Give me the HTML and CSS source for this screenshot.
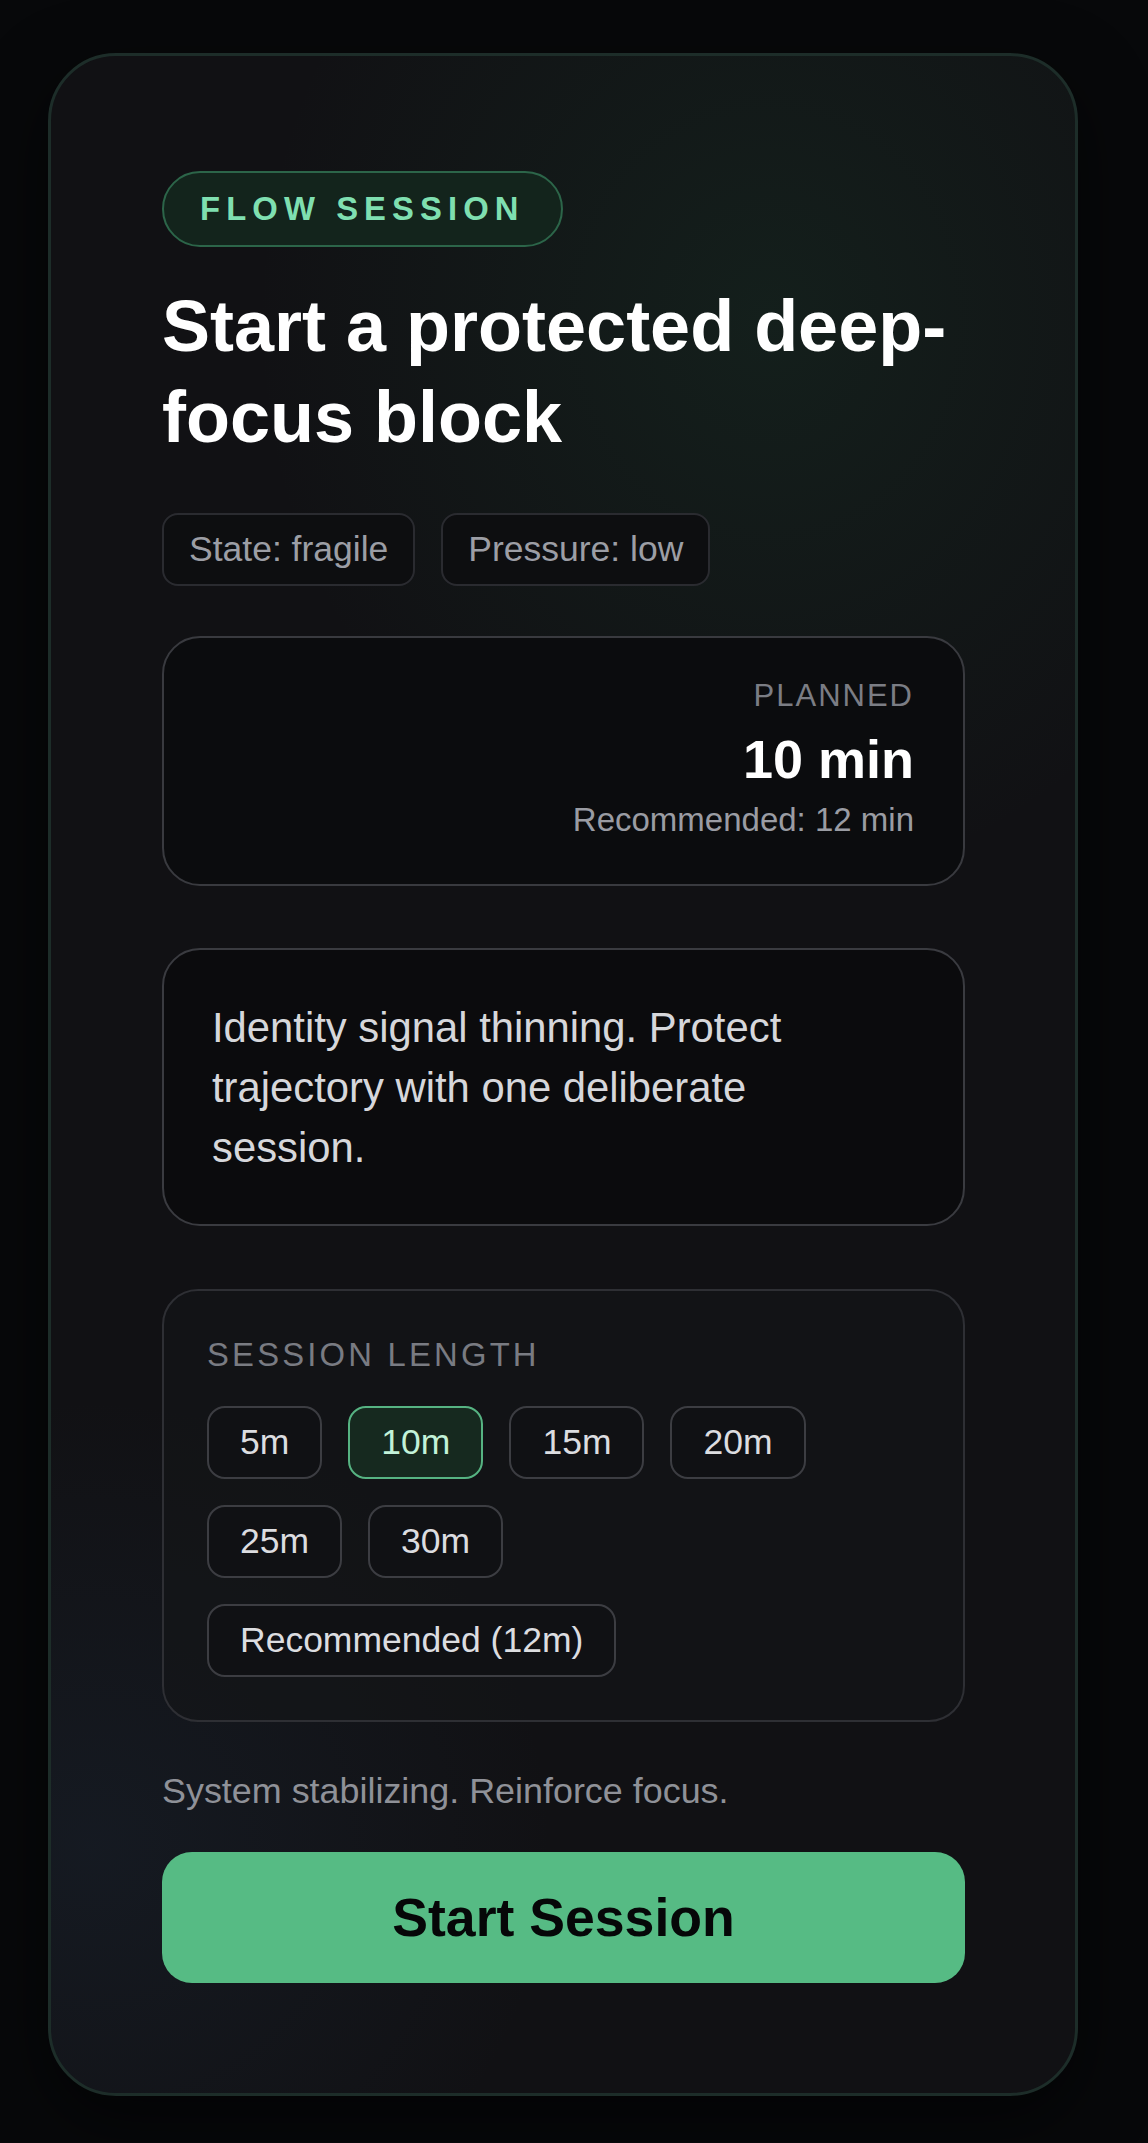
FILE: index.html
```html
<!DOCTYPE html>
<html lang="en">
<head>
<meta charset="utf-8">
<title>Flow Session</title>
<link rel="stylesheet" href="styles.css">
</head>
<body>
<main class="card">
  <div class="badge">FLOW SESSION</div>
  <h1 class="title">Start a protected deep-focus block</h1>
  <div class="chips">
    <span class="chip">State: fragile</span>
    <span class="chip">Pressure: low</span>
  </div>
  <section class="planned">
    <div class="planned-label">PLANNED</div>
    <div class="planned-value">10 min</div>
    <div class="planned-rec">Recommended: 12 min</div>
  </section>
  <section class="message">
    <p class="message-text">Identity signal thinning. Protect trajectory with one deliberate session.</p>
  </section>
  <section class="length">
    <div class="length-label">SESSION LENGTH</div>
    <div class="options">
      <button class="option">5m</button>
      <button class="option active">10m</button>
      <button class="option">15m</button>
      <button class="option">20m</button>
      <button class="option">25m</button>
      <button class="option">30m</button>
      <button class="option">Recommended (12m)</button>
    </div>
  </section>
  <p class="status">System stabilizing. Reinforce focus.</p>
  <button class="start">Start Session</button>
</main>
</body>
</html>
```

FILE: styles.css
```css
* { box-sizing: border-box; }

html, body {
  margin: 0;
  background: #07080a;
}

body {
  padding: 53px 70px 46px 48px;
  font-family: "Liberation Sans", Arial, Helvetica, sans-serif;
  color: #fff;
}

.card {
  width: 1030px;
  border: 3px solid #1d2d29;
  border-radius: 68px;
  padding: 115px 110px 110px 111px;
  background:
    radial-gradient(ellipse 50% 28% at 70% 13%, rgba(36, 112, 72, 0.15), rgba(36, 112, 72, 0) 100%),
    radial-gradient(ellipse 45% 22% at 4% 88%, rgba(40, 66, 96, 0.18), rgba(40, 66, 96, 0) 100%),
    #111114;
  box-shadow: 0 24px 70px rgba(0, 0, 0, 0.55);
  display: flex;
  flex-direction: column;
  align-items: stretch;
}

.badge {
  align-self: flex-start;
  height: 76px;
  line-height: 72px;
  padding: 0 36px;
  border: 2px solid #2c6549;
  border-radius: 38px;
  background: #13241c;
  color: #7fdfb0;
  font-weight: 700;
  font-size: 32.8px;
  letter-spacing: 6.1px;
}

.title {
  margin: 34px 0 0;
  font-size: 72px;
  line-height: 91.3px;
  font-weight: 700;
  color: #ffffff;
}

.chips {
  margin-top: 49px;
  display: flex;
  gap: 26px;
}

.chip {
  height: 73px;
  display: inline-flex;
  align-items: center;
  padding: 0 25px;
  border: 2px solid #2a2b30;
  border-radius: 16px;
  background: #0d0e10;
  color: #9c9ea5;
  font-size: 35.5px;
}

.planned {
  margin-top: 50px;
  border: 2px solid #393a3f;
  border-radius: 38px;
  background: #0b0c0e;
  padding: 38px 49px 44px;
  text-align: right;
}

.planned-label {
  font-size: 31px;
  line-height: 40px;
  letter-spacing: 2px;
  color: #7b7d84;
}

.planned-value {
  margin-top: 12px;
  font-size: 54px;
  line-height: 62px;
  font-weight: 700;
  color: #ffffff;
}

.planned-rec {
  margin-top: 10px;
  font-size: 33px;
  line-height: 40px;
  color: #9a9ca3;
}

.message {
  margin-top: 62px;
  border: 2px solid #3a3b40;
  border-radius: 38px;
  background: #0b0b0d;
  padding: 48px 48px 46px;
}

.message-text {
  margin: 0;
  max-width: 640px;
  font-size: 41.8px;
  line-height: 60px;
  color: #d6d7db;
}

.length {
  margin-top: 63px;
  border: 2px solid #2e2f34;
  border-radius: 36px;
  background: rgba(20, 21, 24, 0.6);
  padding: 44px 43px 43px 43px;
}

.length-label {
  font-size: 32.8px;
  line-height: 40px;
  letter-spacing: 3.2px;
  color: #797b82;
}

.options {
  margin-top: 31px;
  display: flex;
  flex-wrap: wrap;
  gap: 26px;
}

.option {
  height: 73px;
  display: inline-flex;
  align-items: center;
  padding: 0 31px;
  border: 2px solid #3c3d42;
  border-radius: 18px;
  background: #101114;
  color: #dcdde0;
  font-family: inherit;
  font-size: 35.5px;
  cursor: pointer;
}

.option.active {
  border-color: #56b382;
  background: #16291f;
  color: #c2f2d8;
}

.status {
  margin: 44px 0 0;
  font-size: 35.9px;
  line-height: 50px;
  color: #8f9198;
}

.start {
  margin-top: 36px;
  height: 131px;
  border: 0;
  border-radius: 30px;
  background: #56bb84;
  color: #060708;
  font-family: inherit;
  font-size: 53.6px;
  font-weight: 700;
  cursor: pointer;
}
```
